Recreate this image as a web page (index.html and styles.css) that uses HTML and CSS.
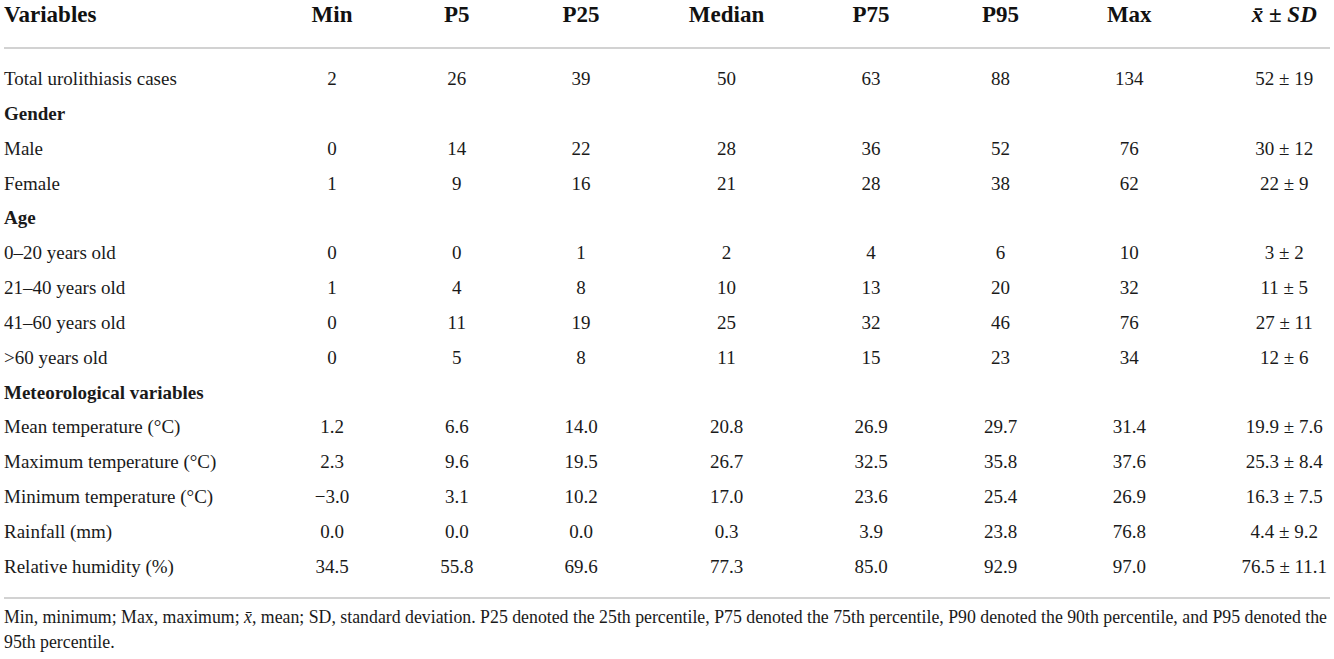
FILE: index.html
```html
<!DOCTYPE html>
<html lang="en">
  <head>
    <meta charset="UTF-8" />
    <meta name="viewport" content="width=device-width, initial-scale=1.0" />
    <title>Descriptive statistics of urolithiasis cases and meteorological variables</title>
    <link rel="stylesheet" href="styles.css">
  </head>
  <body>
    <div class="table-wrap">
      <table class="stats-table">
        <colgroup>
          <col class="col-label" />
          <col class="col-min" />
          <col class="col-p5" />
          <col class="col-p25" />
          <col class="col-median" />
          <col class="col-p75" />
          <col class="col-p95" />
          <col class="col-max" />
          <col class="col-mean" />
        </colgroup>
        <thead>
          <tr>
            <th>Variables</th>
            <th>Min</th>
            <th>P5</th>
            <th>P25</th>
            <th>Median</th>
            <th>P75</th>
            <th>P95</th>
            <th>Max</th>
            <th><i>x̄</i> ± <i>SD</i></th>
          </tr>
        </thead>
        <tbody>
          <tr><td>Total urolithiasis cases</td><td>2</td><td>26</td><td>39</td><td>50</td><td>63</td><td>88</td><td>134</td><td>52 ± 19</td></tr>
          <tr class="group"><td>Gender</td><td></td><td></td><td></td><td></td><td></td><td></td><td></td><td></td></tr>
          <tr><td>Male</td><td>0</td><td>14</td><td>22</td><td>28</td><td>36</td><td>52</td><td>76</td><td>30 ± 12</td></tr>
          <tr><td>Female</td><td>1</td><td>9</td><td>16</td><td>21</td><td>28</td><td>38</td><td>62</td><td>22 ± 9</td></tr>
          <tr class="group"><td>Age</td><td></td><td></td><td></td><td></td><td></td><td></td><td></td><td></td></tr>
          <tr><td>0–20 years old</td><td>0</td><td>0</td><td>1</td><td>2</td><td>4</td><td>6</td><td>10</td><td>3 ± 2</td></tr>
          <tr><td>21–40 years old</td><td>1</td><td>4</td><td>8</td><td>10</td><td>13</td><td>20</td><td>32</td><td>11 ± 5</td></tr>
          <tr><td>41–60 years old</td><td>0</td><td>11</td><td>19</td><td>25</td><td>32</td><td>46</td><td>76</td><td>27 ± 11</td></tr>
          <tr><td>&gt;60 years old</td><td>0</td><td>5</td><td>8</td><td>11</td><td>15</td><td>23</td><td>34</td><td>12 ± 6</td></tr>
          <tr class="group"><td>Meteorological variables</td><td></td><td></td><td></td><td></td><td></td><td></td><td></td><td></td></tr>
          <tr><td>Mean temperature (°C)</td><td>1.2</td><td>6.6</td><td>14.0</td><td>20.8</td><td>26.9</td><td>29.7</td><td>31.4</td><td>19.9 ± 7.6</td></tr>
          <tr><td>Maximum temperature (°C)</td><td>2.3</td><td>9.6</td><td>19.5</td><td>26.7</td><td>32.5</td><td>35.8</td><td>37.6</td><td>25.3 ± 8.4</td></tr>
          <tr><td>Minimum temperature (°C)</td><td>−3.0</td><td>3.1</td><td>10.2</td><td>17.0</td><td>23.6</td><td>25.4</td><td>26.9</td><td>16.3 ± 7.5</td></tr>
          <tr><td>Rainfall (mm)</td><td>0.0</td><td>0.0</td><td>0.0</td><td>0.3</td><td>3.9</td><td>23.8</td><td>76.8</td><td>4.4 ± 9.2</td></tr>
          <tr><td>Relative humidity (%)</td><td>34.5</td><td>55.8</td><td>69.6</td><td>77.3</td><td>85.0</td><td>92.9</td><td>97.0</td><td>76.5 ± 11.1</td></tr>
        </tbody>
      </table>

      <p class="table-note">
        Min, minimum; Max, maximum; <i>x̄</i>, mean; SD, standard deviation. P25 denoted the 25th percentile, P75 denoted the 75th percentile, P90 denoted the 90th percentile, and P95 denoted the 95th percentile.
      </p>
    </div>
  </body>
</html>
```

FILE: styles.css
```css
* {
  margin: 0;
  padding: 0;
  box-sizing: border-box;
}

body {
  font-family: "Liberation Serif", "Times New Roman", serif;
  background: #fff;
  color: #1a1a1a;
}

.table-wrap {
  padding: 0 4px;
}

.stats-table {
  width: 1326px;
  table-layout: fixed;
  border-collapse: collapse;
}

.col-label { width: 265.5px; }
.col-min { width: 125px; }
.col-p5 { width: 124.5px; }
.col-p25 { width: 135px; }
.col-median { width: 145px; }
.col-p75 { width: 137px; }
.col-p95 { width: 129px; }
.col-max { width: 141.5px; }
.col-mean { width: 123.5px; }

.stats-table th {
  font-size: 23px;
  font-weight: bold;
  color: #111;
  line-height: 30px;
  padding-bottom: 17px;
  text-align: center;
  white-space: nowrap;
  border-bottom: 2px solid #d2d2d2;
}

.stats-table td {
  font-size: 19px;
  line-height: 34.85px;
  text-align: center;
  white-space: nowrap;
}

.stats-table th:first-child,
.stats-table td:first-child {
  text-align: left;
}

/* nudge columns so values sit where the source had them */
.stats-table tr > :nth-child(4) { padding-right: 11px; }
.stats-table tr > :nth-child(6) { padding-left: 7px; }
.stats-table tr > :nth-child(8) { padding-right: 13px; }
.stats-table tr > :nth-child(9) { padding-left: 32px; }

.stats-table tbody tr:first-child td {
  padding-top: 13px;
}

.stats-table tbody tr:last-child td {
  padding-bottom: 12px;
  border-bottom: 2px solid #d2d2d2;
}

.stats-table .group td {
  font-weight: bold;
}

.table-note {
  font-size: 17.8px;
  line-height: 25px;
  padding-top: 6px;
  color: #1a1a1a;
}
```
